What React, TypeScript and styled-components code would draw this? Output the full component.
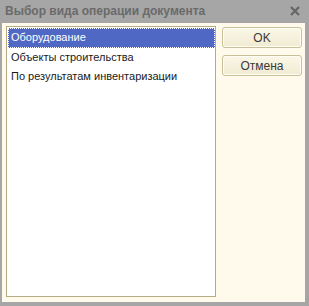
import React, { useState } from 'react'
import styled, { createGlobalStyle } from 'styled-components'

const GlobalStyle = createGlobalStyle`
  html, body {
    margin: 0;
    padding: 0;
    background: #a6a6a6;
  }
`

const Window = styled.div`
  width: 309px;
  height: 306px;
  box-sizing: border-box;
  background: #a6a6a6;
  display: flex;
  flex-direction: column;
  padding: 0 4px 4px 2px;
  font-family: 'Liberation Sans', Arial, sans-serif;
`

const TitleBar = styled.div`
  height: 23px;
  display: flex;
  align-items: center;
  justify-content: space-between;
  padding: 0 5px 1px 3px;
  box-sizing: border-box;
`

const Title = styled.span`
  font-family: 'Liberation Sans', Arial, sans-serif;
  font-weight: bold;
  font-size: 12px;
  color: #6a6a6a;
`

const Body = styled.div`
  flex: 1;
  background: #fffaeb;
  display: flex;
  gap: 6px;
  padding: 3px 2px 5px 4px;
  box-sizing: border-box;
`

const List = styled.div`
  width: 210px;
  border: 1px solid #b5ab84;
  background: #fff;
  box-sizing: border-box;
  padding: 1px 0 0 1px;
  display: flex;
  flex-direction: column;
`

const Row = styled.div<{ $selected?: boolean }>`
  height: 19.5px;
  line-height: 17px;
  padding: 0 2px;
  font-size: 11px;
  color: ${({ $selected }) => ($selected ? '#fff' : '#1a1a1a')};
  background: ${({ $selected }) => ($selected ? '#4f68c4' : 'transparent')};
  border: 1px dotted ${({ $selected }) => ($selected ? '#ffffff' : 'transparent')};
  box-sizing: border-box;
  cursor: default;
  white-space: nowrap;
`

const Buttons = styled.div`
  display: flex;
  flex-direction: column;
  gap: 7px;
  padding-top: 1px;
`

const Button = styled.button`
  width: 80px;
  height: 21px;
  border: 1px solid #c9c09a;
  border-radius: 3px;
  background: linear-gradient(#fbf7e8, #f1ebd2);
  box-shadow: inset 0 0 0 1px #fffdf5;
  font-family: 'Liberation Sans', Arial, sans-serif;
  font-size: 12px;
  color: #3a3a3a;
  padding: 0;
`

const items = ['Оборудование', 'Объекты строительства', 'По результатам инвентаризации']

export default function App() {
  const [selected, setSelected] = useState(0)
  return (
    <>
      <GlobalStyle />
      <Window>
        <TitleBar>
          <Title>Выбор вида операции документа</Title>
          <svg width="10" height="10" viewBox="0 0 10 10">
            <path d="M1 1 L9 9 M9 1 L1 9" stroke="#666" strokeWidth="2.2" />
          </svg>
        </TitleBar>
        <Body>
          <List>
            {items.map((item, i) => (
              <Row key={item} $selected={i === selected} onClick={() => setSelected(i)}>
                {item}
              </Row>
            ))}
          </List>
          <Buttons>
            <Button>OK</Button>
            <Button>Отмена</Button>
          </Buttons>
        </Body>
      </Window>
    </>
  )
}
